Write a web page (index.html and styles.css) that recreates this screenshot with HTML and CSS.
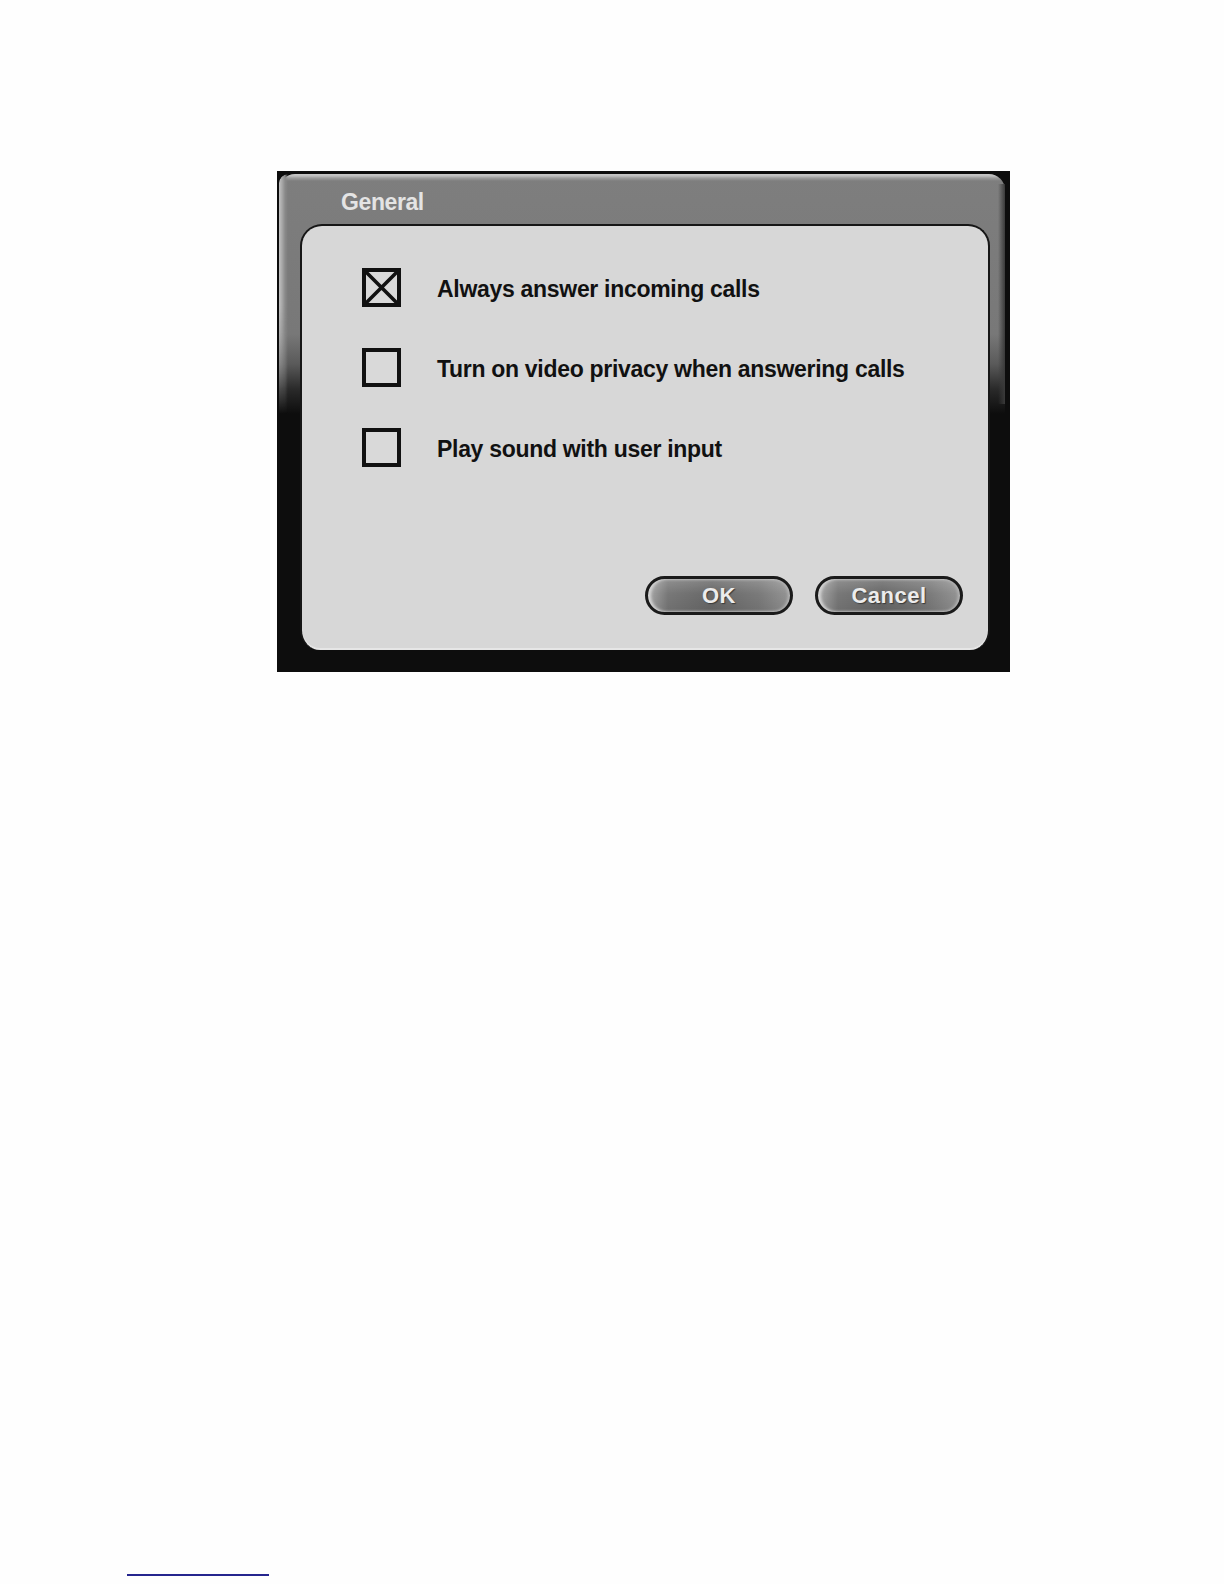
FILE: index.html
```html
<!DOCTYPE html>
<html lang="en">
<head>
<meta charset="utf-8">
<title>General</title>
<link rel="stylesheet" href="styles.css">
</head>
<body>
<main class="page">
  <section class="dialog">
    <div class="frame">
      <header class="title-bar">General</header>
      <div class="panel">
        <ul class="options">
          <li class="option">
            <span class="checkbox is-checked">
              <svg viewBox="0 0 31 31" width="31" height="31" aria-hidden="true"><path d="M0 0L31 31M31 0L0 31" stroke="#111" stroke-width="3.6" fill="none"/></svg>
            </span>
            <span class="label">Always answer incoming calls</span>
          </li>
          <li class="option">
            <span class="checkbox"></span>
            <span class="label">Turn on video privacy when answering calls</span>
          </li>
          <li class="option">
            <span class="checkbox"></span>
            <span class="label">Play sound with user input</span>
          </li>
        </ul>
        <div class="actions">
          <button class="pill-button" type="button">OK</button>
          <button class="pill-button" type="button">Cancel</button>
        </div>
      </div>
    </div>
  </section>
  <hr class="footnote-rule">
</main>
</body>
</html>
```

FILE: styles.css
```css
html, body {
  margin: 0;
  padding: 0;
  background: #fefefe;
}

body {
  font-family: "Liberation Sans", Arial, Helvetica, sans-serif;
  color: #111;
}

.page {
  padding-top: 171px;
  display: flex;
  flex-direction: column;
  align-items: flex-start;
}

.dialog {
  margin-left: 277px;
  width: 733px;
  height: 501px;
  box-sizing: border-box;
  padding: 3px 5px 0 2px;
  background: #0d0d0d;
  display: flex;
}

.frame {
  position: relative;
  flex: 1;
  display: flex;
  flex-direction: column;
  box-sizing: border-box;
  padding: 0 15px 22px 21px;
  border-radius: 16px 16px 0 0;
  background:
    linear-gradient(to bottom, #c9c9c9 0, #bdbdbd 2px, #9c9c9c 4px, rgba(124,124,124,0) 7px) top left / 100% 8px no-repeat,
    linear-gradient(to bottom, #7e7e7e 0, #787878 160px, #5a5a5a 190px, #2a2a2a 215px, #0d0d0d 240px);
}

.frame::before {
  content: "";
  position: absolute;
  left: 0;
  top: 0;
  width: 9px;
  height: 240px;
  border-top-left-radius: 16px;
  background: linear-gradient(to right, #c2c2c2 0, #a8a8a8 3px, #8a8a8a 6px, rgba(120,120,120,0) 9px);
  -webkit-mask-image: linear-gradient(to bottom, #000 0, #000 55%, transparent 100%);
  mask-image: linear-gradient(to bottom, #000 0, #000 55%, transparent 100%);
}

.frame::after {
  content: "";
  position: absolute;
  right: 0;
  top: 10px;
  width: 7px;
  height: 220px;
  background: linear-gradient(to left, #3a3a3a 0, rgba(90,90,90,0) 7px);
}

.title-bar {
  height: 50px;
  box-sizing: border-box;
  padding: 15px 0 0 41px;
  font-size: 23px;
  font-weight: 700;
  letter-spacing: -0.4px;
  line-height: 26px;
  color: #e4e4e4;
}

.panel {
  flex: 1;
  display: flex;
  flex-direction: column;
  box-sizing: border-box;
  padding: 42px 25px 35px 60px;
  background: #d7d7d7;
  border: 2px solid #161616;
  border-bottom: 0;
  border-radius: 22px 22px 20px 20px;
  box-shadow: inset 0 -2px 0 #e6e6e6;
}

.options {
  list-style: none;
  margin: 0;
  padding: 0;
  display: flex;
  flex-direction: column;
  gap: 41px;
}

.option {
  display: flex;
  align-items: center;
  gap: 36px;
  height: 39px;
}

.checkbox {
  width: 39px;
  height: 39px;
  box-sizing: border-box;
  border: 4px solid #111;
  flex: none;
  display: flex;
  align-items: center;
  justify-content: center;
  background: #d9d9d9;
}

.checkbox svg {
  display: block;
}

.label {
  font-size: 23px;
  font-weight: 700;
  letter-spacing: -0.3px;
  line-height: 26px;
  color: #111;
  padding-top: 3px;
}

.actions {
  margin-top: auto;
  display: flex;
  justify-content: flex-end;
  gap: 22px;
}

.pill-button {
  width: 148px;
  height: 39px;
  box-sizing: border-box;
  border: 3px solid #1a1a1a;
  border-radius: 20px;
  padding: 0;
  font-family: "Liberation Sans", Arial, Helvetica, sans-serif;
  font-size: 22px;
  font-weight: 700;
  letter-spacing: 0.5px;
  color: #ececec;
  text-shadow: 1px 1px 1px #3a3a3a;
  background:
    linear-gradient(to bottom, rgba(255,255,255,0.18) 0, rgba(255,255,255,0) 45%, rgba(0,0,0,0.08) 100%),
    linear-gradient(to right, #a9a9a9 0, #787878 14%, #686868 45%, #7a7a7a 78%, #959595 100%);
  box-shadow: inset 3px 0 3px #d4d4d4, inset -2px 0 3px #b4b4b4;
  cursor: pointer;
}

.footnote-rule {
  margin: 902px 0 0 127px;
  width: 142px;
  height: 0;
  border: 0;
  border-top: 2px solid #25258e;
}
```
